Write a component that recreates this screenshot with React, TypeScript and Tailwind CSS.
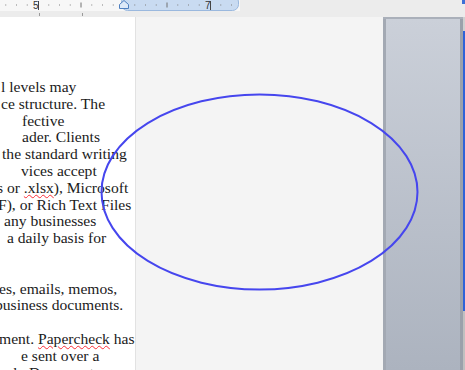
import React from 'react'

const lines: { text: React.ReactNode; ml: number }[] = [
  { text: 'l levels may', ml: 1 },
  { text: 'ce structure. The', ml: 1 },
  { text: 'fective', ml: 22 },
  { text: 'ader. Clients', ml: 22 },
  { text: 'the standard writing', ml: 2 },
  { text: 'vices accept', ml: 21 },
  {
    text: (
      <>
        s or <span className="underline decoration-wavy decoration-red-500 decoration-1">.xlsx</span>), Microsoft
      </>
    ),
    ml: -3,
  },
  { text: 'F), or Rich Text Files', ml: -2 },
  { text: 'any businesses', ml: 4 },
  { text: 'a daily basis for', ml: 7 },
  { text: '\u00a0', ml: 0 },
  { text: '\u00a0', ml: 0 },
  { text: 'es, emails, memos,', ml: -1 },
  { text: 'business documents.', ml: -5 },
  { text: '\u00a0', ml: 0 },
  {
    text: (
      <>
        ment. <span className="underline decoration-wavy decoration-red-500 decoration-1">Papercheck</span> has
      </>
    ),
    ml: -1,
  },
  { text: 'e sent over a', ml: 21 },
  { text: 'network. Documents', ml: -30 },
]

function Ruler() {
  const step = 10.75
  const ticks: React.ReactNode[] = []
  for (let i = -3; i < 22; i++) {
    const x = 38 + i * step
    if (i % 8 === 0) continue
    if (i % 4 === 0) ticks.push(<line key={i} x1={x} y1={2.5} x2={x} y2={7.5} stroke="#707070" strokeWidth={1} />)
    else ticks.push(<rect key={i} x={x - 0.5} y={4.5} width={1} height={1} fill="#808080" />)
  }
  return (
    <svg width="240" height="11" className="block">
      <rect x="0" y="0" width="240" height="11" fill="#f7f7f7" />
      <rect x="121.5" y="-4" width="117" height="14.5" rx="6" fill="#c9dbf1" stroke="#9ab8de" />
      {ticks}
      <text x="33" y="9" fontSize="10" fontFamily="Liberation Sans, sans-serif" fill="#333">5</text>
      <line x1={38.5} y1={1} x2={38.5} y2={10} stroke="#444" />
      <text x="205" y="9" fontSize="10" fontFamily="Liberation Sans, sans-serif" fill="#333">7</text>
      <line x1={210.5} y1={1} x2={210.5} y2={10} stroke="#444" />
      <path d="M119.5 8.5 L119.5 4.5 L124 0.5 L128.5 4.5 L128.5 8.5 Z" fill="#dde9f8" stroke="#4f7fbf" />
    </svg>
  )
}

export default function App() {
  return (
    <div className="relative w-[465px] h-[370px] overflow-hidden bg-[#f4f4f4] flex flex-col">
      {/* ruler strip */}
      <div className="h-[17px] bg-[#ececec] flex shrink-0">
        <div className="flex flex-col">
          <Ruler />
          <div className="relative h-[6px]">
            <div className="absolute left-[39px] top-[2px] w-px h-[3px] bg-[#9a9a9a]" />
            <div className="absolute left-[82px] top-[2px] w-px h-[3px] bg-[#9a9a9a]" />
          </div>
        </div>
        <div className="flex-1" />
        <div className="w-[3px] h-[4px] bg-[#3d6fd6]" />
      </div>

      <div className="flex flex-1 min-h-0">
        {/* page */}
        <div className="w-[136px] bg-white border-r border-[#e2e2e2] overflow-hidden pt-[62px] font-['Liberation_Serif',serif] text-[15.6px] leading-[16.8px] text-[#1b1b1b]">
          {lines.map((l, i) => (
            <div key={i} className="whitespace-nowrap" style={{ marginLeft: l.ml }}>
              {l.text}
            </div>
          ))}
        </div>

        {/* gray canvas */}
        <div className="flex-1" />

        {/* side panel */}
        <div className="w-[80px] flex border-t-2 border-[#aab0ba]">
          <div className="w-[3px] bg-[#a3a9b3]" />
          <div className="flex-1 bg-gradient-to-b from-[#cbd0d9] to-[#acb3bf]" />
          <div className="w-[3px] bg-[#9ba1ab]" />
        </div>
        <div className="w-[2px] flex flex-col">
          <div className="h-[14px] bg-[#d0d0d0]" />
          <div className="h-[280px] bg-[#2f62d8]" />
          <div className="flex-1 bg-[#c0c0c0]" />
        </div>
      </div>

      {/* hand-drawn ellipse overlay */}
      <svg className="absolute left-0 top-0 pointer-events-none" width="465" height="370">
        <ellipse cx="259.5" cy="192" rx="158" ry="97.5" fill="none" stroke="#4646ee" strokeWidth="2" />
      </svg>
    </div>
  )
}
